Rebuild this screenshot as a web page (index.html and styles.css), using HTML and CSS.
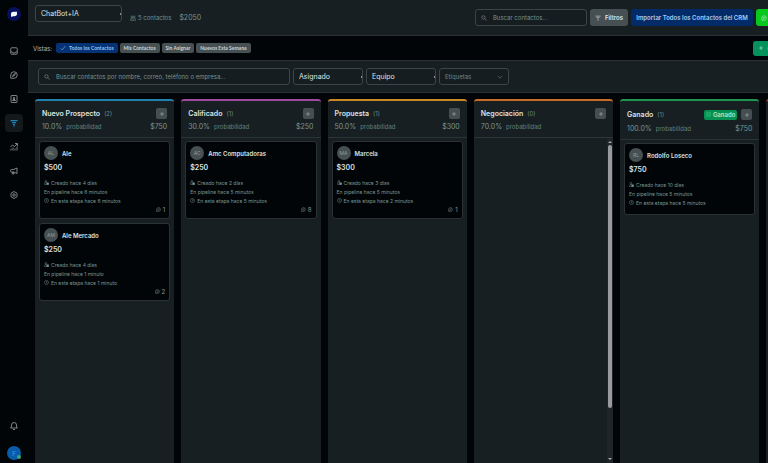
FILE: index.html
```html
<!DOCTYPE html>
<html lang="es">
<head>
  <meta charset="UTF-8">
  <meta name="viewport" content="width=device-width, initial-scale=1.0">
  <title>ChatBot+IA</title>
  <link rel="stylesheet" href="styles.css">
</head>
<body>

  <!-- Shared icons -->
  <svg class="sprite" aria-hidden="true">
    <symbol id="search" viewBox="0 0 16 16"><circle cx="6.5" cy="6.5" r="4.5"/><path d="M10 10l5 5"/></symbol>
    <symbol id="funnel" viewBox="0 0 16 16"><path d="M1 3h14M4 7h8M6 11h4M7 14h2"/></symbol>
    <symbol id="plus" viewBox="0 0 16 16"><path d="M8 3v10M3 8h10"/></symbol>
    <symbol id="person" viewBox="0 0 16 16"><circle cx="6" cy="4.5" r="3"/><path d="M1 14c0-4 2-6 5-6 2 0 3 1 4 2v4z"/><path class="solid" d="M9 9h6v6H9z"/></symbol>
    <symbol id="clock" viewBox="0 0 16 16"><circle cx="8" cy="8" r="6.5"/><path d="M8 4v5h3"/></symbol>
    <symbol id="chat" viewBox="0 0 16 16"><path d="M2 14V8a6 6 0 1 1 6 6z"/><path d="M5 7h6M5 10h4"/></symbol>
  </svg>

  <!-- Sidebar -->
  <nav class="sidebar" aria-label="Principal">
    <a href="#" class="logo" aria-label="Inicio">
      <svg viewBox="0 0 16 16"><path d="M2 12V8c0-3 2-4.500 5-4.500h7V8c0 2.500-2 4.500-5 4.500H6L3 14z"/></svg>
    </a>
    <a href="#" class="nav-link" aria-label="Bandeja">
      <svg class="icon" viewBox="0 0 16 16"><rect x="1.5" y="1.5" width="13" height="13" rx="2"/><path d="M2 10h3l1 2h4l1-2h3"/></svg>
    </a>
    <a href="#" class="nav-link" aria-label="Conversaciones">
      <svg class="icon" viewBox="0 0 16 16"><path d="M1.5 14.5V8A6.5 6.5 0 1 1 8 14.5z"/><path d="M5 11l2-4 4-2-2 4z"/></svg>
    </a>
    <a href="#" class="nav-link" aria-label="Contactos">
      <svg class="icon" viewBox="0 0 16 16"><rect x="2" y="1" width="12" height="14" rx="1"/><circle cx="8" cy="6" r="1.5"/><path d="M5 11c0-3 6-3 6 0z"/></svg>
    </a>
    <a href="#" class="nav-link active" aria-label="Embudo">
      <svg class="icon"><use href="#funnel"/></svg>
    </a>
    <a href="#" class="nav-link" aria-label="Informes">
      <svg class="icon" viewBox="0 0 16 16"><path d="M2 15v-4M6 15V9M10 15v-4M14 15V7M1 8l4-4 4 3 5-5M10 1h5v5"/></svg>
    </a>
    <a href="#" class="nav-link" aria-label="Campañas">
      <svg class="icon" viewBox="0 0 16 16"><path d="M14 2v11l-7-3H3a2 2 0 0 1-2-2V7a2 2 0 0 1 2-2h4zM4 10l1 4h3l-1-4"/></svg>
    </a>
    <a href="#" class="nav-link" aria-label="Ajustes">
      <svg class="icon" viewBox="0 0 16 16"><path d="M8 1l6 3.500v7L8 15l-6-3.500v-7z"/><circle cx="8" cy="8" r="2.5"/></svg>
    </a>
    <a href="#" class="nav-link bell" aria-label="Notificaciones">
      <svg class="icon" viewBox="0 0 16 16"><path d="M1 12h14l-2-2V6A5 5 0 0 0 3 6v4zM6 15h4"/></svg>
    </a>
    <button class="profile" aria-label="Perfil">F</button>
  </nav>

  <main>
    <header class="header">
      <select class="field pipeline" aria-label="Embudo"><option>ChatBot+IA</option></select>
      <div class="summary">
        <svg class="icon" viewBox="0 0 16 16"><circle cx="5" cy="5" r="2.5"/><circle cx="11" cy="5" r="2.5"/><path d="M1 14v-2c0-4 7-4 7 0v2zM8 14h7v-2c0-3-3-4-5-3"/></svg>
        <span>5 contactos</span>
        <span class="total">$2050</span>
      </div>
      <label class="field search small-search">
        <svg class="icon"><use href="#search"/></svg>
        <input type="text" placeholder="Buscar contactos..." aria-label="Buscar contactos">
      </label>
      <button class="btn grey"><svg class="icon"><use href="#funnel"/></svg>Filtros</button>
      <button class="btn blue">Importar Todos los Contactos del CRM</button>
      <button class="btn lime" aria-label="WhatsApp"><svg class="icon"><use href="#chat"/></svg></button>
    </header>

    <section class="views">
      <span class="views-label">Vistas:</span>
      <button class="chip selected"><svg class="icon" viewBox="0 0 16 16"><path d="M2 9l4 4 8-10"/></svg>Todos los Contactos</button>
      <button class="chip">Mis Contactos</button>
      <button class="chip">Sin Asignar</button>
      <button class="chip">Nuevos Esta Semana</button>
      <button class="btn green"><svg class="icon"><use href="#plus"/></svg>Guardar</button>
    </section>

    <section class="filters">
      <label class="field search big-search">
        <svg class="icon"><use href="#search"/></svg>
        <input type="text" placeholder="Buscar contactos por nombre, correo, teléfono o empresa..." aria-label="Buscar contactos por nombre">
      </label>
      <select class="field" aria-label="Asignado"><option>Asignado</option></select>
      <select class="field" aria-label="Equipo"><option>Equipo</option></select>
      <button class="field tags">Etiquetas<svg class="icon" viewBox="0 0 16 16"><path d="M2 5l6 6 6-6"/></svg></button>
    </section>

    <!-- Board -->
    <section class="board">
      <section class="column sky">
        <header class="column-head">
          <div class="row"><h2>Nuevo Prospecto</h2><span class="count">(2)</span><button class="add" aria-label="Añadir"><svg class="icon"><use href="#plus"/></svg></button></div>
          <div class="row stats"><span>10.0%</span><span class="prob">probabilidad</span><span class="sum">$750</span></div>
        </header>
        <div class="cards">
          <article class="card">
            <div class="person"><span class="avatar">AL</span><h3>Ale</h3></div>
            <div class="amount">$500</div>
            <p><svg class="icon"><use href="#person"/></svg>Creado hace 4 días</p>
            <p>En pipeline hace 6 minutos</p>
            <p><svg class="icon"><use href="#clock"/></svg>En esta etapa hace 6 minutos</p>
            <div class="messages"><svg class="icon"><use href="#chat"/></svg>1</div>
          </article>
          <article class="card">
            <div class="person"><span class="avatar">AM</span><h3>Ale Mercado</h3></div>
            <div class="amount">$250</div>
            <p><svg class="icon"><use href="#person"/></svg>Creado hace 4 días</p>
            <p>En pipeline hace 1 minuto</p>
            <p><svg class="icon"><use href="#clock"/></svg>En esta etapa hace 1 minuto</p>
            <div class="messages"><svg class="icon"><use href="#chat"/></svg>2</div>
          </article>
        </div>
      </section>

      <section class="column purple">
        <header class="column-head">
          <div class="row"><h2>Calificado</h2><span class="count">(1)</span><button class="add" aria-label="Añadir"><svg class="icon"><use href="#plus"/></svg></button></div>
          <div class="row stats"><span>30.0%</span><span class="prob">probabilidad</span><span class="sum">$250</span></div>
        </header>
        <div class="cards">
          <article class="card">
            <div class="person"><span class="avatar">AC</span><h3>Amc Computadoras</h3></div>
            <div class="amount">$250</div>
            <p><svg class="icon"><use href="#person"/></svg>Creado hace 2 días</p>
            <p>En pipeline hace 5 minutos</p>
            <p><svg class="icon"><use href="#clock"/></svg>En esta etapa hace 5 minutos</p>
            <div class="messages"><svg class="icon"><use href="#chat"/></svg>8</div>
          </article>
        </div>
      </section>

      <section class="column amber">
        <header class="column-head">
          <div class="row"><h2>Propuesta</h2><span class="count">(1)</span><button class="add" aria-label="Añadir"><svg class="icon"><use href="#plus"/></svg></button></div>
          <div class="row stats"><span>50.0%</span><span class="prob">probabilidad</span><span class="sum">$300</span></div>
        </header>
        <div class="cards">
          <article class="card">
            <div class="person"><span class="avatar">MA</span><h3>Marcela</h3></div>
            <div class="amount">$300</div>
            <p><svg class="icon"><use href="#person"/></svg>Creado hace 3 días</p>
            <p>En pipeline hace 5 minutos</p>
            <p><svg class="icon"><use href="#clock"/></svg>En esta etapa hace 2 minutos</p>
            <div class="messages"><svg class="icon"><use href="#chat"/></svg>1</div>
          </article>
        </div>
      </section>

      <section class="column orange">
        <header class="column-head">
          <div class="row"><h2>Negociación</h2><span class="count">(0)</span><button class="add" aria-label="Añadir"><svg class="icon"><use href="#plus"/></svg></button></div>
          <div class="row stats"><span>70.0%</span><span class="prob">probabilidad</span></div>
        </header>
        <div class="scrollbar">
          <svg viewBox="0 0 6 4"><path d="M1 3l2-2 2 2z"/></svg>
          <div class="thumb"></div>
          <svg viewBox="0 0 6 4"><path d="M1 1l2 2 2-2z"/></svg>
        </div>
      </section>

      <section class="column emerald">
        <header class="column-head">
          <div class="row tall"><h2>Ganado</h2><span class="count">(1)</span><span class="badge"><i></i>Ganado</span><button class="add" aria-label="Añadir"><svg class="icon"><use href="#plus"/></svg></button></div>
          <div class="row stats"><span>100.0%</span><span class="prob">probabilidad</span><span class="sum">$750</span></div>
        </header>
        <div class="cards">
          <article class="card">
            <div class="person"><span class="avatar">RL</span><h3>Rodolfo Loseco</h3></div>
            <div class="amount">$750</div>
            <p><svg class="icon"><use href="#person"/></svg>Creado hace 10 días</p>
            <p>En pipeline hace 5 minutos</p>
            <p><svg class="icon"><use href="#clock"/></svg>En esta etapa hace 5 minutos</p>
          </article>
        </div>
      </section>

      <section class="column red"></section>
    </section>
  </main>

</body>
</html>
```
FILE: styles.css
```css
* {
  box-sizing: border-box;
}

body {
  margin: 0;
  display: flex;
  height: 100vh;
  overflow: hidden;
  background-color: #020507;
  color: #dce3e4;
  font-family: Inter, "Liberation Sans", sans-serif;
  font-size: 6px;
}

button,
input,
select {
  font: inherit;
  color: inherit;
  margin: 0;
}

button {
  border: none;
  cursor: pointer;
}

h2,
h3,
p {
  margin: 0;
}

.sprite {
  display: none;
}

.icon {
  width: 6px;
  height: 6px;
  flex: none;
  fill: none;
  stroke: currentColor;
  stroke-width: 1.5;
}

.solid {
  fill: currentColor;
}

/* Sidebar */
.sidebar {
  flex: 0 0 28px;
  display: flex;
  flex-direction: column;
  align-items: center;
  gap: 6px;
  padding: 7px 0 3px;
}

.logo {
  width: 14px;
  height: 14px;
  margin-bottom: 15px;
  padding: 3px;
  border-radius: 50%;
  background-color: #06105c;
}

.logo svg {
  display: block;
  fill: #f4f8ff;
}

.nav-link {
  display: flex;
  align-items: center;
  justify-content: center;
  width: 18px;
  height: 18px;
  flex: none;
  border-radius: 4px;
  color: #a4aaab;
}

.nav-link .icon {
  width: 8px;
  height: 8px;
}

.nav-link.active {
  background-color: #14191c;
  color: #1c84bd;
}

.nav-link.active .icon {
  stroke-width: 2.5;
}

.bell {
  margin-top: auto;
}

.profile {
  position: relative;
  width: 14px;
  height: 14px;
  flex: none;
  padding: 0;
  margin-top: 5px;
  border-radius: 50%;
  background-color: #0b5ca8;
  color: #2f9de8;
}

.profile::after {
  content: "";
  position: absolute;
  right: 0;
  bottom: 1px;
  width: 4px;
  height: 4px;
  border-radius: 50%;
  background-color: #3aa876;
}

main {
  flex: 1;
  min-width: 0;
  display: flex;
  flex-direction: column;
  overflow: hidden;
}

/* Fields and buttons */
.field {
  height: 17px;
  padding: 0 5px;
  border: 1px solid #3c4547;
  border-radius: 3px;
  background-color: #161d20;
}

select.field {
  appearance: none;
  background-image: linear-gradient(#8b9394, #8b9394);
  background-size: 1px 2px;
  background-position: right center;
  background-repeat: no-repeat;
  font-size: 7px;
}

.search {
  display: flex;
  align-items: center;
  gap: 6px;
  color: #8d9697;
}

.search input {
  flex: 1;
  min-width: 0;
  padding: 0;
  border: none;
  outline: none;
  background: none;
}

.search input::placeholder {
  color: #73938f;
  opacity: 1;
}

.btn {
  display: flex;
  align-items: center;
  justify-content: center;
  gap: 4px;
  height: 17px;
  flex: none;
  padding: 0 5px;
  border-radius: 3px;
  font-weight: 600;
  white-space: nowrap;
}

.grey {
  background-color: #465053;
}

.blue {
  width: 122px;
  background-color: #032b68;
  color: #a9cdf2;
}

.lime {
  width: 40px;
  justify-content: flex-start;
  background-color: #06c81f;
}

.green {
  height: 15px;
  margin-left: auto;
  background-color: #06925c;
}

/* Header, runs past the right edge */
.header {
  display: flex;
  align-items: center;
  gap: 3px;
  height: 36px;
  flex: none;
  margin-right: -28px;
  padding-left: 7px;
  border-bottom: 1px solid #293133;
  background-color: #181f22;
}

.pipeline {
  width: 87px;
  align-self: flex-start;
  margin-top: 5px;
}

.summary {
  flex: 1;
  display: flex;
  align-items: center;
  gap: 2px;
  padding-left: 5px;
  color: #73938f;
}

.total {
  margin-left: 6px;
  font-size: 7px;
}

.small-search {
  width: 112px;
}

/* Views */
.views {
  display: flex;
  align-items: center;
  gap: 2px;
  height: 24px;
  flex: none;
  margin-right: -28px;
  padding-left: 5px;
}

.views-label {
  margin-right: 2px;
  color: #b2baba;
}

.chip {
  display: flex;
  align-items: center;
  gap: 3px;
  height: 10px;
  padding: 0 4px;
  border-radius: 2px;
  background-color: #464f52;
  color: #c9d4d4;
  font-family: Lato, sans-serif;
  font-size: 5px;
  font-weight: 700;
}

.chip.selected {
  background-color: #043275;
  color: #92c5f2;
}

/* Filters */
.filters {
  display: flex;
  align-items: center;
  gap: 3px;
  height: 33px;
  flex: none;
  padding: 0 10px;
  border-top: 1px solid #293133;
  border-bottom: 1px solid #293133;
  background-color: #181f22;
}

.filters .field {
  width: 70px;
}

.filters .big-search {
  width: 252px;
}

.tags {
  display: flex;
  align-items: center;
  justify-content: space-between;
  color: #6f8583;
}

/* Board */
.board {
  flex: 1;
  min-height: 0;
  display: flex;
  gap: 7px;
  padding: 6px 0 0 7px;
}

.column {
  flex: 0 0 19%;
  display: flex;
  flex-direction: column;
  border-top: 2px solid;
  border-radius: 3px 3px 0 0;
  background-color: #181f22;
}

.sky { border-color: #2282ae; }
.purple { border-color: #9c4b9d; }
.amber { border-color: #c98827; }
.orange { border-color: #c56c28; }
.emerald { border-color: #1e9450; }
.red { border-color: #b83232; }

.column-head {
  padding: 7px 7px 5px;
  border-bottom: 1px solid #2c3436;
}

.row {
  display: flex;
  align-items: center;
  gap: 4px;
  height: 11px;
}

.row.tall {
  height: 13px;
}

.row h2 {
  font-size: 7px;
  font-weight: 600;
}

.count {
  color: #668782;
}

.add {
  display: flex;
  align-items: center;
  justify-content: center;
  width: 11px;
  height: 11px;
  margin-left: auto;
  padding: 0;
  border-radius: 2px;
  background-color: #454e51;
  color: #b0b8b9;
}

.badge {
  display: flex;
  align-items: center;
  gap: 2px;
  height: 10px;
  margin-left: auto;
  padding: 0 2px;
  border-radius: 2px;
  background-color: #069052;
  color: #b4e8cf;
  font-weight: 600;
}

.badge i {
  width: 5px;
  height: 5px;
  background-color: #16a765;
}

.badge + .add {
  margin-left: 0;
}

.stats {
  margin-top: 2px;
  color: #779692;
  font-size: 7px;
}

.prob {
  color: #62827e;
  font-size: 6px;
}

.sum {
  margin-left: auto;
}

.cards {
  display: flex;
  flex-direction: column;
  gap: 4px;
  padding: 3px 4px;
}

.card {
  min-height: 72px;
  padding: 4px;
  border: 1px solid #2b3234;
  border-radius: 3px;
  background-color: #020507;
}

.person {
  display: flex;
  align-items: center;
  gap: 4px;
}

.avatar {
  width: 14px;
  height: 14px;
  border-radius: 50%;
  background-color: #465052;
  color: #8d999a;
  font-size: 5px;
  line-height: 14px;
  text-align: center;
}

.card h3 {
  font-size: 6px;
  font-weight: 600;
}

.amount {
  margin: 3px 0 5px;
  font-size: 7px;
  font-weight: 600;
  line-height: 10px;
}

.card p {
  display: flex;
  align-items: center;
  gap: 2px;
  height: 9px;
  color: #7a9793;
  font-size: 5px;
}

.card p .icon,
.messages .icon {
  width: 5px;
  height: 5px;
}

.messages {
  display: flex;
  align-items: center;
  justify-content: flex-end;
  gap: 2px;
  height: 9px;
  color: #8b9898;
}

.scrollbar {
  flex: 1;
  display: flex;
  flex-direction: column;
  width: 6px;
  margin-left: auto;
  padding: 2px 0;
  background-color: #202628;
}

.scrollbar svg {
  width: 6px;
  height: 4px;
  fill: #a5a9aa;
}

.scrollbar .thumb {
  width: 4px;
  height: 82%;
  margin: 1px 1px auto;
  border-radius: 2px;
  background-color: #979b9d;
}
```
